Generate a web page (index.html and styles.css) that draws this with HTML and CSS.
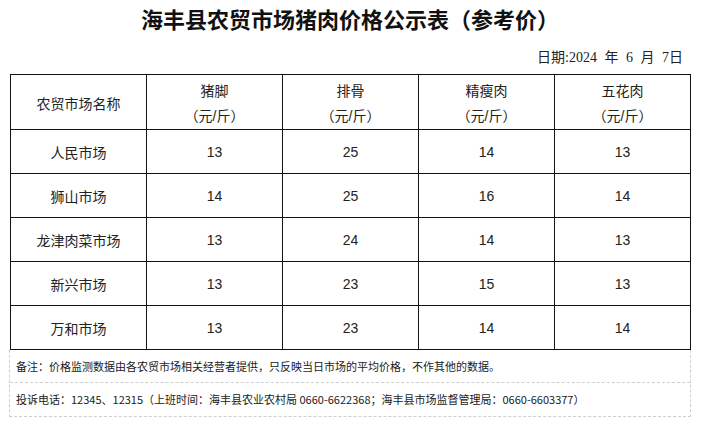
FILE: index.html
```html
<!DOCTYPE html>
<html lang="zh-CN">
<head>
<meta charset="utf-8">
<title>海丰县农贸市场猪肉价格公示表（参考价）</title>
<link rel="stylesheet" href="styles.css">
</head>
<body>
<div class="page">
  <h1 class="title">海丰县农贸市场猪肉价格公示表（参考价）</h1>
  <div class="date">日期:2024 年 6 月 7日</div>
  <table class="prices">
    <colgroup>
      <col class="c-name"><col><col><col><col>
    </colgroup>
    <thead>
      <tr>
        <th class="th-name">农贸市场名称</th>
        <th>猪脚<br>（元/斤）</th>
        <th>排骨<br>（元/斤）</th>
        <th>精瘦肉<br>（元/斤）</th>
        <th>五花肉<br>（元/斤）</th>
      </tr>
    </thead>
    <tbody>
      <tr><td>人民市场</td><td>13</td><td>25</td><td>14</td><td>13</td></tr>
      <tr><td>狮山市场</td><td>14</td><td>25</td><td>16</td><td>14</td></tr>
      <tr><td>龙津肉菜市场</td><td>13</td><td>24</td><td>14</td><td>13</td></tr>
      <tr><td>新兴市场</td><td>13</td><td>23</td><td>15</td><td>13</td></tr>
      <tr><td>万和市场</td><td>13</td><td>23</td><td>14</td><td>14</td></tr>
    </tbody>
  </table>
  <div class="notes">
    <div class="note note-first">备注：价格监测数据由各农贸市场相关经营者提供，只反映当日市场的平均价格，不作其他的数据。</div>
    <div class="note note-second">投诉电话：12345、12315（上班时间：海丰县农业农村局 0660-6622368；海丰县市场监督管理局：0660-6603377）</div>
  </div>
</div>
</body>
</html>
```
FILE: styles.css
```css
html, body {
  margin: 0;
  padding: 0;
  background: #ffffff;
}

body {
  font-family: "Liberation Sans", "Noto Sans CJK SC", sans-serif;
  color: #222222;
}

.page {
  width: 680px;
  padding: 0 11px 0 10px;
}

.title {
  margin: 0;
  height: 36px;
  line-height: 36px;
  font-size: 22px;
  font-weight: 700;
  text-align: center;
  font-family: "Noto Sans CJK SC", sans-serif;
  color: #111111;
}

.date {
  height: 24px;
  line-height: 24px;
  padding: 10px 7px 4px 0;
  text-align: right;
  font-size: 14px;
  word-spacing: 4px;
  font-family: "Liberation Serif", "Noto Sans CJK SC", serif;
  color: #222222;
}

.prices {
  width: 681px;
  border-collapse: collapse;
  table-layout: fixed;
  font-size: 14px;
}

.prices .c-name {
  width: 136px;
}

.prices th,
.prices td {
  border: 1px solid #111111;
  text-align: center;
  vertical-align: middle;
  padding: 0;
  font-weight: 400;
  color: #222222;
}

.prices th {
  height: 50px;
  line-height: 25px;
  padding-top: 4px;
}

.prices td {
  height: 43px;
}

.notes {
  width: 680px;
  margin-left: -1px;
  border: 1px dashed #cfcfcf;
  border-top: none;
  font-size: 11px;
  font-family: "Noto Sans CJK SC", sans-serif;
  color: #1a1a1a;
}

.note {
  padding-left: 6px;
}

.note-first {
  height: 32px;
  line-height: 32px;
  border-bottom: 1px dashed #cfcfcf;
}

.note-second {
  height: 33px;
  line-height: 33px;
}
```
